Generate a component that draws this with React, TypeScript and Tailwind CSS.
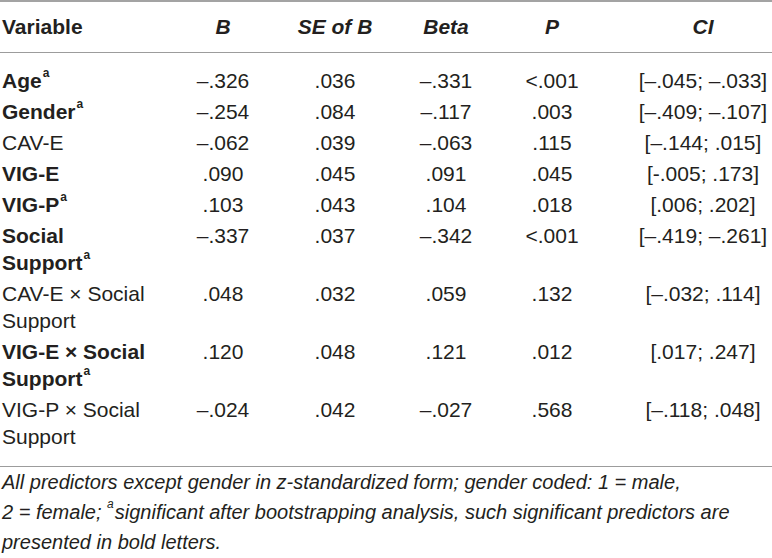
const ROWS = [
  { v: "Age", sup: true, bold: true, b: "–.326", se: ".036", beta: "–.331", p: "<.001", ci: "[–.045; –.033]" },
  { v: "Gender", sup: true, bold: true, b: "–.254", se: ".084", beta: "–.117", p: ".003", ci: "[–.409; –.107]" },
  { v: "CAV-E", sup: false, bold: false, b: "–.062", se: ".039", beta: "–.063", p: ".115", ci: "[–.144; .015]" },
  { v: "VIG-E", sup: false, bold: true, b: ".090", se: ".045", beta: ".091", p: ".045", ci: "[-.005; .173]" },
  { v: "VIG-P", sup: true, bold: true, b: ".103", se: ".043", beta: ".104", p: ".018", ci: "[.006; .202]" },
  { v: "Social Support", sup: true, bold: true, b: "–.337", se: ".037", beta: "–.342", p: "<.001", ci: "[–.419; –.261]" },
  { v: "CAV-E × Social Support", sup: false, bold: false, b: ".048", se: ".032", beta: ".059", p: ".132", ci: "[–.032; .114]" },
  { v: "VIG-E × Social Support", sup: true, bold: true, b: ".120", se: ".048", beta: ".121", p: ".012", ci: "[.017; .247]" },
  { v: "VIG-P × Social Support", sup: false, bold: false, b: "–.024", se: ".042", beta: "–.027", p: ".568", ci: "[–.118; .048]" },
];

const GRID = "grid grid-cols-[170px_106px_118px_104px_108px_1fr]";

export default function App() {
  return (
    <div className="w-[772px] h-[558px] bg-white text-[#231f20] font-['Liberation_Sans',Arial,sans-serif] overflow-hidden">
      <div className="border-t-2 border-[#a3a3a3]" />
      {/* Kopfzeile */}
      <div className={`${GRID} h-[51px] items-center text-[21px] font-bold border-b border-[#9c9c9c]`}>
        <div className="pl-[2px]">Variable</div>
        <div className="text-center italic">B</div>
        <div className="text-center italic">SE of B</div>
        <div className="text-center italic">Beta</div>
        <div className="text-center italic">P</div>
        <div className="text-center italic pl-[28px]">CI</div>
      </div>

      <div className="pt-[12px] pb-[14px] border-b border-[#9c9c9c] text-[21px] leading-[27px]">
        {ROWS.map((r) => (
          <div key={r.v} className={`${GRID} py-[2px]`}>
            <div className={`pl-[2px] pr-[20px] ${r.bold ? "font-bold" : ""}`}>
              {r.v}
              {r.sup && <sup className="ml-px text-[12px] align-[5px] leading-none">a</sup>}
            </div>
            <div className="text-center">{r.b}</div>
            <div className="text-center">{r.se}</div>
            <div className="text-center">{r.beta}</div>
            <div className="text-center">{r.p}</div>
            <div className="text-center pl-[28px]">{r.ci}</div>
          </div>
        ))}
      </div>

      <p className="pl-[2px] pr-[20px] italic text-[20px] leading-[30px]">
        All predictors except gender in z-standardized form; gender coded: 1 = male,
        <br />
        2 = female; <sup className="mr-px text-[12px] align-[5px] leading-none">a</sup>significant after
        bootstrapping analysis, such significant predictors are presented in bold letters.
      </p>
    </div>
  );
}
